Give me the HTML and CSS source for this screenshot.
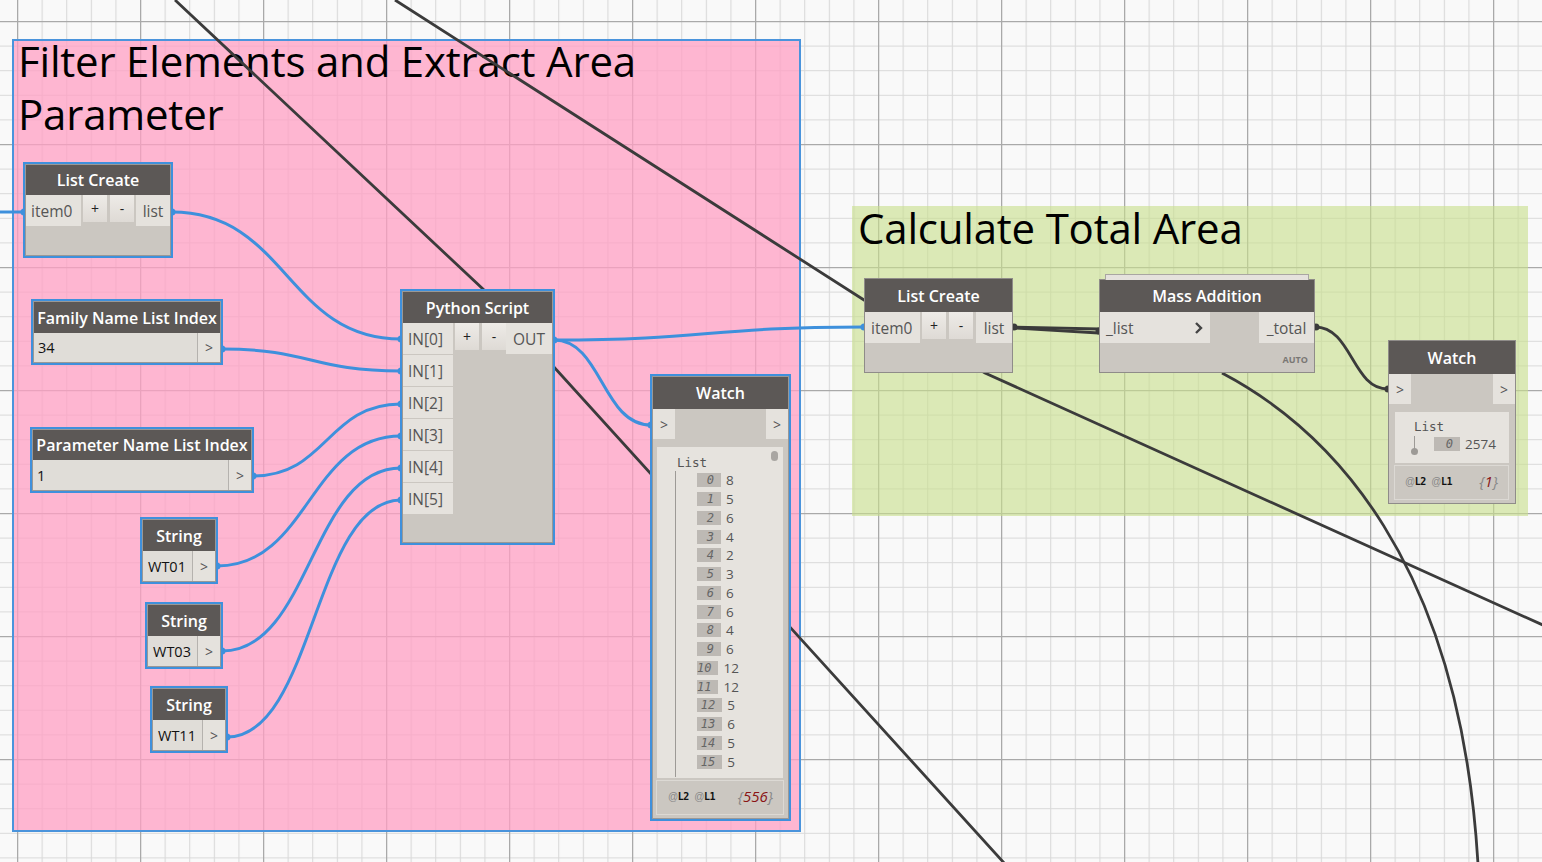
FILE: index.html
```html
<!DOCTYPE html>
<html>
<head>
<meta charset="utf-8">
<link rel="stylesheet" href="styles.css">
</head>
<body>
<div class="canvas">
  <svg class="grid" width="1542" height="862">
    <defs>
      <pattern id="minor" width="24.6" height="24.6" patternUnits="userSpaceOnUse" x="17" y="21">
        <path d="M0.5 0 V24.6 M0 0.5 H24.6" stroke="#d9d9d9" stroke-width="1.2" fill="none"/>
      </pattern>
      <pattern id="major" width="123" height="123" patternUnits="userSpaceOnUse" x="17" y="21">
        <path d="M0.6 0 V123 M0 0.6 H123" stroke="#a9a9a9" stroke-width="1.3" fill="none"/>
      </pattern>
    </defs>
    <rect width="1542" height="862" fill="#f9f9f9"/>
    <rect width="1542" height="862" fill="url(#minor)"/>
    <rect width="1542" height="862" fill="url(#major)"/>
  </svg>

  <div class="group g-pink"><div class="g-title">Filter Elements and Extract Area Parameter</div></div>
  <div class="group g-green"><div class="g-title">Calculate Total Area</div></div>

  <svg class="wires" width="1542" height="862">
    <g fill="none" stroke="#3b3b3b" stroke-width="2.8">
      <path d="M175 0 L484 290 L1005 864"/>
      <path d="M395 0 L864 300 L985 373 L1545 626"/>
      <path d="M1222 373 C1330 430 1460 560 1478 864"/>
      <path d="M1013 327 L1099 329"/>
      <path d="M1013 328 L1099 333"/>
      <path d="M1315 327 C1352 327 1352 389 1388 389"/>
    </g>
    <g fill="#3b3b3b">
      <circle cx="1014" cy="327" r="3.5"/>
      <circle cx="1099" cy="331" r="3.5"/>
      <circle cx="1316" cy="327" r="3.5"/>
      <circle cx="1388" cy="389" r="3.5"/>
    </g>
    <g fill="none" stroke="#3e90dc" stroke-width="3">
      <path d="M0 212 L24 212"/>
      <path d="M172 212 C287 212 287 339 401 339"/>
      <path d="M222 349 C311 349 311 371 401 371"/>
      <path d="M253 476 C327 476 327 404 401 404"/>
      <path d="M217 566 C309 566 309 436 401 436"/>
      <path d="M222 651 C311 651 311 468 401 468"/>
      <path d="M227 737 C314 737 314 500 401 500"/>
      <path d="M554 340 C602 340 602 425 651 425"/>
      <path d="M554 340 C708 340 708 327 864 327"/>
    </g>
    <g fill="#3e90dc">
      <circle cx="24" cy="212" r="3.5"/>
      <circle cx="172" cy="212" r="3.5"/>
      <circle cx="222" cy="349" r="3.5"/>
      <circle cx="253" cy="476" r="3.5"/>
      <circle cx="217" cy="566" r="3.5"/>
      <circle cx="222" cy="651" r="3.5"/>
      <circle cx="227" cy="737" r="3.5"/>
      <circle cx="401" cy="339" r="3.5"/>
      <circle cx="401" cy="371" r="3.5"/>
      <circle cx="401" cy="404" r="3.5"/>
      <circle cx="401" cy="436" r="3.5"/>
      <circle cx="401" cy="468" r="3.5"/>
      <circle cx="401" cy="500" r="3.5"/>
      <circle cx="554" cy="340" r="3.5"/>
      <circle cx="651" cy="425" r="3.5"/>
      <circle cx="864" cy="327" r="3.5"/>
    </g>
  </svg>

  <!-- List Create (pink) -->
  <div class="node sel n-lc1">
    <div class="head h30">List Create</div>
    <div class="prow">
      <div class="port w55">item0</div>
      <div class="btn">+</div>
      <div class="btn">-</div>
      <div class="port out w34">list</div>
    </div>
  </div>

  <!-- Family Name List Index -->
  <div class="node sel n-fam">
    <div class="head h31">Family Name List Index</div>
    <div class="irow">
      <div class="ival">34</div>
      <div class="iarrow">&gt;</div>
    </div>
  </div>

  <!-- Parameter Name List Index -->
  <div class="node sel n-par">
    <div class="head h30">Parameter Name List Index</div>
    <div class="irow">
      <div class="ival">1</div>
      <div class="iarrow">&gt;</div>
    </div>
  </div>

  <div class="node sel n-s1">
    <div class="head h31">String</div>
    <div class="irow"><div class="ival sval">WT01</div><div class="iarrow">&gt;</div></div>
  </div>
  <div class="node sel n-s2">
    <div class="head h31">String</div>
    <div class="irow"><div class="ival sval">WT03</div><div class="iarrow">&gt;</div></div>
  </div>
  <div class="node sel n-s3">
    <div class="head h31">String</div>
    <div class="irow"><div class="ival sval">WT11</div><div class="iarrow">&gt;</div></div>
  </div>

  <!-- Python Script -->
  <div class="node sel n-py">
    <div class="head h31">Python Script</div>
    <div class="py-body">
      <div class="py-in">
        <div class="port pin">IN[0]</div>
        <div class="port pin">IN[1]</div>
        <div class="port pin">IN[2]</div>
        <div class="port pin">IN[3]</div>
        <div class="port pin">IN[4]</div>
        <div class="port pin">IN[5]</div>
      </div>
      <div class="py-mid">
        <div class="btn">+</div>
        <div class="btn">-</div>
      </div>
      <div class="port out pout">OUT</div>
    </div>
  </div>

  <!-- Watch (pink) -->
  <div class="node sel n-w1">
    <div class="head h32">Watch</div>
    <div class="wrow">
      <div class="wport">&gt;</div>
      <div class="wport">&gt;</div>
    </div>
    <div class="wpanel wp1">
      <div class="thumb"></div>
      <div class="wl-title">List</div>
      <div class="wl-body">
        <div class="wl-row"><span class="idx">0</span><span class="val">8</span></div>
        <div class="wl-row"><span class="idx">1</span><span class="val">5</span></div>
        <div class="wl-row"><span class="idx">2</span><span class="val">6</span></div>
        <div class="wl-row"><span class="idx">3</span><span class="val">4</span></div>
        <div class="wl-row"><span class="idx">4</span><span class="val">2</span></div>
        <div class="wl-row"><span class="idx">5</span><span class="val">3</span></div>
        <div class="wl-row"><span class="idx">6</span><span class="val">6</span></div>
        <div class="wl-row"><span class="idx">7</span><span class="val">6</span></div>
        <div class="wl-row"><span class="idx">8</span><span class="val">4</span></div>
        <div class="wl-row"><span class="idx">9</span><span class="val">6</span></div>
        <div class="wl-row"><span class="idx idx2">10</span><span class="val">12</span></div>
        <div class="wl-row"><span class="idx idx2">11</span><span class="val">12</span></div>
        <div class="wl-row"><span class="idx idx2">12</span><span class="val">5</span></div>
        <div class="wl-row"><span class="idx idx2">13</span><span class="val">6</span></div>
        <div class="wl-row"><span class="idx idx2">14</span><span class="val">5</span></div>
        <div class="wl-row"><span class="idx idx2">15</span><span class="val">5</span></div>
      </div>
    </div>
    <div class="wfoot">
      <span class="lv"><span class="at">@</span>L2 <span class="at">@</span>L1</span>
      <span class="cnt"><span class="br">{</span>556<span class="br">}</span></span>
    </div>
  </div>

  <!-- List Create (green) -->
  <div class="node n-lc2">
    <div class="head h33">List Create</div>
    <div class="prow">
      <div class="port w55">item0</div>
      <div class="btn">+</div>
      <div class="btn">-</div>
      <div class="port out w36">list</div>
    </div>
  </div>

  <!-- Mass Addition -->
  <div class="node n-ma">
    <div class="stack"></div>
    <div class="head h32">Mass Addition</div>
    <div class="prow">
      <div class="port mlist">_list<svg class="chev" width="10" height="14" viewBox="0 0 10 14"><path d="M2 2 L7 7 L2 12" fill="none" stroke="#444" stroke-width="2.4"/></svg></div>
      <div class="port out mtotal">_total</div>
    </div>
    <div class="auto">AUTO</div>
  </div>

  <!-- Watch (green) -->
  <div class="node n-w2">
    <div class="head h33">Watch</div>
    <div class="wrow">
      <div class="wport">&gt;</div>
      <div class="wport">&gt;</div>
    </div>
    <div class="wpanel wp2">
      <div class="wl-title t2">List</div>
      <div class="wl-single">
        <div class="stem"></div>
        <span class="idx idx-w">0</span><span class="val">2574</span>
      </div>
    </div>
    <div class="wfoot wf2">
      <span class="lv"><span class="at">@</span>L2 <span class="at">@</span>L1</span>
      <span class="cnt"><span class="br">{</span>1<span class="br">}</span></span>
    </div>
  </div>
</div>
</body>
</html>
```
FILE: styles.css
```css
* { box-sizing: border-box; }
html, body { margin: 0; padding: 0; }
body { width: 1542px; height: 862px; overflow: hidden; font-family: "Open Sans", "Noto Sans", sans-serif; }

.canvas { position: relative; width: 1542px; height: 862px; overflow: hidden; }
.grid, .wires { position: absolute; left: 0; top: 0; }

.group { position: absolute; }
.g-pink { left: 12px; top: 39px; width: 789px; height: 793px; background: rgba(255, 160, 196, 0.76); border: 2px solid #4a94dc; }
.g-green { left: 852px; top: 206px; width: 676px; height: 310px; background: rgba(200, 222, 140, 0.62); }
.g-title { font-size: 42px; line-height: 53px; color: #000; font-weight: 400; letter-spacing: -0.2px; }
.g-pink .g-title { margin-top: -7px; padding-left: 4px; width: 680px; }
.g-green .g-title { margin-top: -3px; padding-left: 6px; line-height: 50px; }

/* nodes */
.node { position: absolute; background: #cbc7c1; border: 1px solid #8f8c89; display: flex; flex-direction: column; }
.node.sel { box-shadow: 0 0 0 2px #3f90dc; border-color: #9a9896; }
.head { background: #5c5856; color: #fff; font-weight: 600; font-size: 16px; display: flex; align-items: center; justify-content: center; flex-shrink: 0; white-space: nowrap; }
.h30 { height: 30px; }
.h31 { height: 31px; }
.h32 { height: 32px; }
.h33 { height: 33px; }

.prow { display: flex; height: 31px; }
.port { background: #e5e2dd; color: #555; font-size: 15.5px; display: flex; align-items: center; padding-left: 5px; height: 31px; }
.port.out { padding-left: 0; justify-content: center; margin-left: auto; }
.w55 { width: 55px; }
.w34 { width: 34px; }
.w36 { width: 36px; }
.btn { width: 24px; height: 27px; margin-left: 2px; background: linear-gradient(#eeebe7, #dedad5); color: #222; font-size: 14px; display: flex; align-items: center; justify-content: center; }
.btn + .btn { margin-left: 3px; }

.irow { display: flex; height: 29px; }
.n-par .irow, .n-s1 .irow, .n-s2 .irow, .n-s3 .irow { height: 30px; }
.ival { flex: 1; background: #e0ddd8; color: #111; font-size: 14.5px; display: flex; align-items: center; padding-left: 4px; border-right: 1px solid #b5b2ae; }
.sval { padding-left: 5px; }
.iarrow { width: 22px; background: #e5e2dd; color: #555; font-size: 14px; display: flex; align-items: center; justify-content: center; }

.n-lc1 { left: 25px; top: 164px; width: 146px; height: 92px; }
.n-fam { left: 33px; top: 301px; width: 188px; height: 62px; }
.n-par { left: 32px; top: 429px; width: 220px; height: 62px; }
.n-s1 { left: 142px; top: 519px; width: 74px; height: 63px; }
.n-s2 { left: 147px; top: 604px; width: 74px; height: 63px; }
.n-s3 { left: 152px; top: 688px; width: 74px; height: 63px; }

/* python */
.n-py { left: 402px; top: 291px; width: 151px; height: 252px; }
.py-body { display: flex; }
.py-in { display: flex; flex-direction: column; gap: 1px; }
.pin { width: 50px; padding-left: 5px; }
.py-mid { display: flex; }
.pout { width: 46px; }

/* watch */
.n-w1 { left: 652px; top: 376px; width: 137px; height: 443px; }
.wrow { display: flex; justify-content: space-between; height: 30px; flex-shrink: 0; }
.wport { width: 22px; background: #e5e2dd; color: #555; font-size: 14px; display: flex; align-items: center; justify-content: center; }
.wpanel { position: relative; background: #e6e3de; margin: 8px 5px 0 4px; font-family: "DejaVu Sans Mono", "Liberation Mono", monospace; color: #555; }
.wp1 { height: 331px; padding: 8px 0 0 19px; }
.thumb { position: absolute; right: 5px; top: 4px; width: 7px; height: 10px; border-radius: 4px; background: #a9a6a2; }
.wl-title { font-size: 12.5px; line-height: 16px; padding-left: 1px; }
.wl-body { border-left: 1px solid #9d9a96; margin-left: -1px; padding: 0 0 6px 21px; width: 60px; }
.wl-row { display: flex; align-items: center; height: 18.75px; }
.idx { display: inline-block; width: 24px; height: 14px; background: #bdb9b4; color: #666; font-style: italic; font-size: 12px; line-height: 14px; text-align: right; padding-right: 7px; }
.idx2 { width: 32px; }
.val { font-family: "Open Sans", sans-serif; font-size: 13.5px; color: #555; margin-left: 5px; line-height: 14px; }

.wfoot { display: flex; align-items: center; justify-content: space-between; height: 35px; margin: 2px 4px 0 3px; border: 1px solid #dcd9d4; padding: 0 10px 3px 11px; background: #cbc7c1; }
.lv { font-family: "DejaVu Sans Mono", monospace; font-size: 10px; color: #111; font-weight: 700; letter-spacing: -0.5px; }
.at { color: #888; font-weight: 400; font-family: "Liberation Sans", sans-serif; }
.cnt { font-style: italic; font-size: 15px; color: #8a1414; font-family: "Open Sans", sans-serif; }
.br { color: #888; }

.n-lc2 { left: 864px; top: 278px; width: 149px; height: 95px; }
.n-lc2 .port.w55 { padding-left: 6px; }

.n-ma { left: 1099px; top: 279px; width: 216px; height: 94px; }
.stack { position: absolute; left: 5px; right: 5px; top: -6px; height: 6px; border: 1px solid #a9a6a2; border-bottom: none; background: #e5e2dd; }
.mlist { width: 110px; justify-content: space-between; padding: 0 6px 0 6px; }
.chev { display: block; }
.mtotal { width: 55px; }
.auto { font-size: 9px; font-weight: 700; color: #7a7774; text-align: right; padding: 10px 6px 0 0; }

.n-w2 { left: 1388px; top: 340px; width: 128px; height: 164px; }
.wp2 { height: 51px; margin: 8px 6px 0 6px; padding: 7px 0 0 19px; }
.t2 { padding-left: 0; }
.wl-single { position: relative; display: flex; align-items: center; padding-left: 20px; margin-top: 2px; }
.stem { position: absolute; left: 0; top: -1px; width: 1px; height: 15px; background: #9d9a96; }
.stem::after { content: ""; position: absolute; left: -3px; bottom: -4px; width: 7px; height: 7px; border-radius: 50%; background: #9d9a96; }
.idx-w { width: 26px; }
.wf2 { margin: 2px 6px 0 5px; padding: 0 10px 3px 10px; }
```
